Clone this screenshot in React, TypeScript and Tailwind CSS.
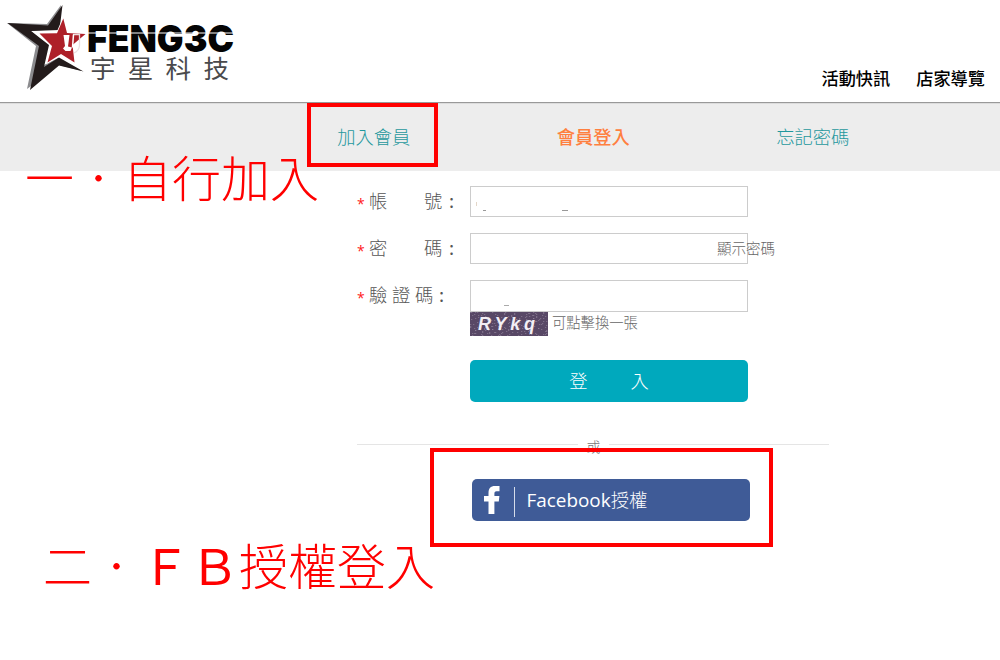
import type { ReactNode } from "react";

interface ITab {
  label: string;
  color: string;
}

const tabs: ITab[] = [
  { label: "加入會員", color: "text-[#1f989d]" },
  { label: "會員登入", color: "text-[#ff7f3f] font-medium" },
  { label: "忘記密碼", color: "text-[#1f989d]" },
];

// positions of the light specks in the captcha background
const specks = Array.from({ length: 190 }, (_, i) => ({
  x: (i * 37 + ((i * i) % 11)) % 78,
  y: (i * 17 + ((i * i) % 7)) % 24,
}));

function Logo() {
  return (
    <svg width="240" height="96" viewBox="0 0 240 96" className="block">
      <path d="M7 23 47 24 61 5 59 29 31 31 47 45 42 66 58 58 82 71 59 65 27 89 36 46Z" fill="#8b8b8e" />
      <path d="M7.5 23 48 25.5 62.500 5 59.500 30 31 31 49 45 44 67 59 57.500 83.500 71.500 59 65.500 30 90 39 46Z" fill="#231b1b" />
      <path
        d="M63.300 18.500 67 33 85.500 34 72.500 45 74.500 62.500 61 54 47.500 62.500 52 46 39.500 33.500 57 33.200Z"
        fill="#ae2029"
        stroke="#fff"
        strokeWidth="1.6"
        paintOrder="stroke"
      />
      <path d="M63.500 35H69.500L68 46.500 72 47.500 70.500 51H65.500L63 48.500 65 46Z" fill="#fff" />
      <path d="M73 34.500H79.500V45.500Q79 51 74 53" fill="none" stroke="#eadfe0" strokeWidth="1.3" />
      <path d="M73.500 34.500 72.500 47.500" fill="none" stroke="#fff" strokeWidth="1.5" />
      <text
        x="87"
        y="51.7"
        textLength="147"
        lengthAdjust="spacingAndGlyphs"
        fontFamily="Inter, sans-serif"
        fontSize="37.5"
        fontWeight="900"
        fill="#050505"
      >
        FENG3C
      </text>
      <path d="M88 33H236" stroke="#fff" strokeWidth="1" />
      <text
        x="90"
        y="78"
        fontFamily="'Noto Sans CJK TC', sans-serif"
        fontSize="25.5"
        fontWeight="400"
        letterSpacing="12.3"
        fill="#4a4a4c"
      >
        宇星科技
      </text>
    </svg>
  );
}

function Captcha() {
  return (
    <div className="relative h-6 w-[78px] overflow-hidden bg-[#584866]">
      <svg width="78" height="24" className="absolute inset-0">
        {specks.map((s, i) => (
          <rect key={i} x={s.x} y={s.y} width="1.3" height="1" fill="#9a8da3" opacity="0.55" />
        ))}
      </svg>
      <span className="relative block pl-2 font-['Liberation_Sans'] text-[18px] leading-6 font-bold tracking-[3.8px] text-[#f3eff5] italic">
        RYkq
      </span>
    </div>
  );
}

function Row({ label, children }: { label: ReactNode; children: ReactNode }) {
  return (
    <div className="flex h-[47px] items-start">
      <div className="flex h-[30px] w-[113px] shrink-0 items-center text-[18.3px] text-[#555]">
        <span className="w-3 pt-1 font-['Open_Sans'] text-[14px] font-normal text-[#ff2020]">*</span>
        {label}
      </div>
      {children}
    </div>
  );
}

export default function App() {
  return (
    <div className="relative h-[660px] w-[1000px] overflow-hidden bg-white font-['Noto_Sans_CJK_TC',sans-serif] font-light">
      <header className="flex h-[104px] items-start justify-between border-b border-[#dcdcdc]">
        <div className="flex h-[103px] w-full justify-between border-b border-[#999]">
          <Logo />
          <nav className="flex gap-[26px] pt-[65px] pr-[15px] text-[17.2px] leading-[26px] font-medium text-black">
            <a>活動快訊</a>
            <a>店家導覽</a>
          </nav>
        </div>
      </header>

      <div className="flex h-[67px] bg-[#ededed] pl-[264px]">
        {tabs.map((tab) => (
          <a
            key={tab.label}
            className={`w-[219.5px] text-center text-[18.3px] leading-[64px] ${tab.color}`}
          >
            {tab.label}
          </a>
        ))}
      </div>

      <main className="ml-[357px] w-[472px] pt-[15px]">
        <Row
          label={
            <>
              <span className="w-[55px]">帳</span>
              <span className="w-[25px]">號</span>
              <span className="font-normal">:</span>
            </>
          }
        >
          <div className="relative h-[31px] w-[278px] border border-[#ccc]">
            {/* leftovers of the erased account name */}
            <i className="absolute top-[15px] left-[5px] h-1 w-px bg-[#e3d6c8]" />
            <i className="absolute top-[23px] left-[12px] h-px w-[3px] bg-[#999]" />
            <i className="absolute top-[23px] left-[91px] h-px w-[6px] bg-[#999]" />
          </div>
        </Row>
        <Row
          label={
            <>
              <span className="w-[55px]">密</span>
              <span className="w-[25px]">碼</span>
              <span className="font-normal">:</span>
            </>
          }
        >
          <div className="relative h-[31px] w-[278px] border border-[#ccc]">
            <span className="absolute top-[2px] left-[246px] text-[14.5px] leading-[24px] whitespace-nowrap text-[#666]">
              顯示密碼
            </span>
          </div>
        </Row>
        <Row
          label={
            <>
              <span className="tracking-[4.7px]">驗證碼</span>
              <span className="pl-px font-normal">:</span>
            </>
          }
        >
          <div>
            <div className="relative h-8 w-[278px] border border-[#ccc]">
              <i className="absolute top-[24px] left-[33px] h-px w-[5px] bg-[#aaa]" />
            </div>
            <div className="flex gap-1">
              <Captcha />
              <span className="text-[14.3px] leading-[19px] text-[#666]">可點擊換一張</span>
            </div>
          </div>
        </Row>

        <button className="mt-[33px] ml-[113px] flex h-[42px] w-[278px] items-center justify-center gap-[43px] rounded-[5px] bg-[#00a9bd] text-[18.3px] text-white">
          <span>登</span>
          <span>入</span>
        </button>

        <div className="mt-[32px] flex h-6 items-center text-[14px] text-[#777]">
          <hr className="mb-[4px] w-[221px] border-[#e5e5e5]" />
          <span className="w-[31px] text-center leading-6">或</span>
          <hr className="mb-[4px] w-[220px] border-[#e5e5e5]" />
        </div>

        <button className="mt-[21px] ml-[114.5px] flex h-[42px] w-[278px] items-center rounded-[5px] bg-[#3f5b97] text-white">
          <svg width="16" height="28" viewBox="0 0 16 28" className="mb-px ml-3">
            <path
              d="M4.500 28V15.500H0V10h4.500V7.200C4.500 2.500 6.500 0 11 0h4.500v5.300H12.500C10.800 5.300 10.400 6.200 10.400 8v2h5l-.6 5.500H10.400V28Z"
              fill="#fff"
            />
          </svg>
          <span className="mt-1 ml-[14px] h-[30px] w-px bg-[#d5dcea]" />
          <span className="ml-[12px] flex items-center text-[18.3px]">
            <span className="font-['Open_Sans'] text-[18.9px] font-normal">Facebook</span>
            授權
          </span>
        </button>
      </main>

      {/* red step markers over the page */}
      <div className="absolute top-[103px] left-[307px] h-[64px] w-[131px] border-4 border-[#f00]" />
      <div className="absolute top-[448px] left-[430px] h-[99px] w-[343px] border-4 border-[#f00]" />
      <p className="absolute top-[140px] left-[25px] text-[49px] leading-[72px] whitespace-nowrap text-[#f00]">
        一．自行加入
      </p>
      <p className="absolute top-[528px] left-[43px] text-[49px] leading-[72px] whitespace-nowrap text-[#f00]">
        二．<span className="font-normal">ＦＢ</span>授權登入
      </p>
    </div>
  );
}
